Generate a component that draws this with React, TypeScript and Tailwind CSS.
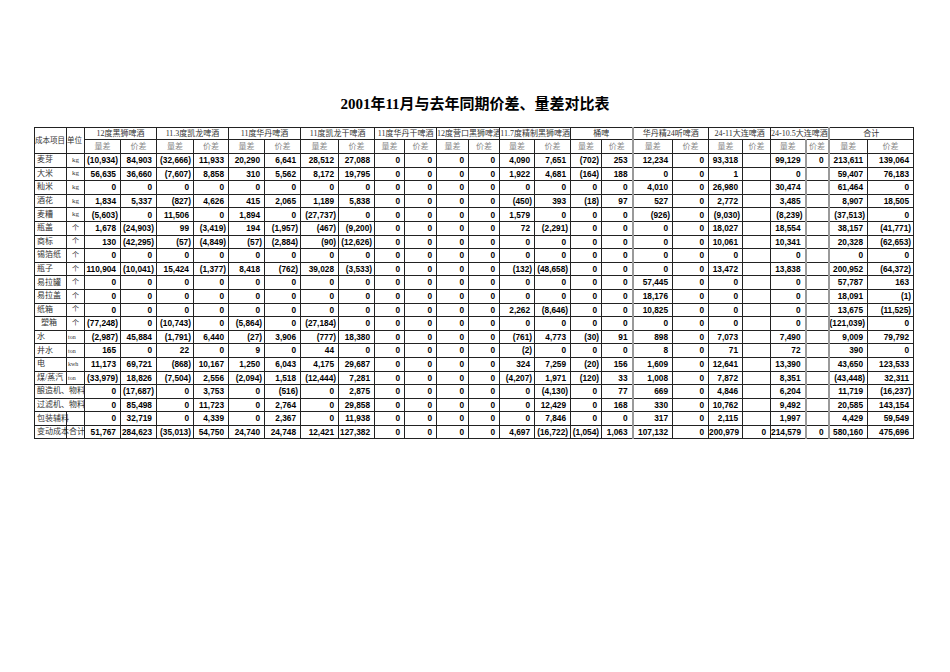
import React from "react";

const serif = "font-['Liberation_Serif','Noto_Sans_CJK_SC',serif]";
const sans = "font-['Liberation_Sans','Noto_Sans_CJK_SC',sans-serif]";

const colWidths = [32, 18, 36, 36, 37, 35, 36, 36, 38, 36, 30, 32, 32, 31, 35, 36, 31, 31, 40, 36, 34, 28, 35, 23, 39, 46];

const groups = [
  "12度黑狮啤酒",
  "11.3度凯龙啤酒",
  "11度华丹啤酒",
  "11度凯龙干啤酒",
  "11度华丹干啤酒",
  "12度营口黑狮啤酒",
  "11.7度精制黑狮啤酒",
  "桶啤",
  "华丹精24听啤酒",
  "24-11大连啤酒",
  "24-10.5大连啤酒",
  "合计",
];

// columns that carry the heavier grey rule on their left side
const thickCols = [16, 21, 22];
const thickGroups = [8, 11];

type Row = {
  label: string;
  unit?: string;
  unitSmall?: boolean;
  span?: boolean;
  rule?: boolean;
  v: string[];
};

const rows: Row[] = [
  { label: "麦芽", unit: "kg", v: ["(10,934)", "84,903", "(32,666)", "11,933", "20,290", "6,641", "28,512", "27,088", "0", "0", "0", "0", "4,090", "7,651", "(702)", "253", "12,234", "0", "93,318", "", "99,129", "0", "213,611", "139,064"] },
  { label: "大米", unit: "kg", v: ["56,635", "36,660", "(7,607)", "8,858", "310", "5,562", "8,172", "19,795", "0", "0", "0", "0", "1,922", "4,681", "(164)", "188", "0", "0", "1", "", "0", "", "59,407", "76,183"] },
  { label: "籼米", unit: "kg", v: ["0", "0", "0", "0", "0", "0", "0", "0", "0", "0", "0", "0", "0", "0", "0", "0", "4,010", "0", "26,980", "", "30,474", "", "61,464", "0"] },
  { label: "酒花", unit: "kg", v: ["1,834", "5,337", "(827)", "4,626", "415", "2,065", "1,189", "5,838", "0", "0", "0", "0", "(450)", "393", "(18)", "97", "527", "0", "2,772", "", "3,485", "", "8,907", "18,505"] },
  { label: "麦糟", unit: "kg", v: ["(5,603)", "0", "11,506", "0", "1,894", "0", "(27,737)", "0", "0", "0", "0", "0", "1,579", "0", "0", "0", "(926)", "0", "(9,030)", "", "(8,239)", "", "(37,513)", "0"] },
  { label: "瓶盖", unit: "个", v: ["1,678", "(24,903)", "99", "(3,419)", "194", "(1,957)", "(467)", "(9,200)", "0", "0", "0", "0", "72", "(2,291)", "0", "0", "0", "0", "18,027", "", "18,554", "", "38,157", "(41,771)"] },
  { label: "商标", unit: "个", v: ["130", "(42,295)", "(57)", "(4,849)", "(57)", "(2,884)", "(90)", "(12,626)", "0", "0", "0", "0", "0", "0", "0", "0", "0", "0", "10,061", "", "10,341", "", "20,328", "(62,653)"] },
  { label: "锡箔纸", unit: "个", v: ["0", "0", "0", "0", "0", "0", "0", "0", "0", "0", "0", "0", "0", "0", "0", "0", "0", "0", "0", "", "0", "", "0", "0"] },
  { label: "瓶子", unit: "个", v: ["110,904", "(10,041)", "15,424", "(1,377)", "8,418", "(762)", "39,028", "(3,533)", "0", "0", "0", "0", "(132)", "(48,658)", "0", "0", "0", "0", "13,472", "", "13,838", "", "200,952", "(64,372)"] },
  { label: "易拉罐", unit: "个", v: ["0", "0", "0", "0", "0", "0", "0", "0", "0", "0", "0", "0", "0", "0", "0", "0", "57,445", "0", "0", "", "0", "", "57,787", "163"] },
  { label: "易拉盖", unit: "个", v: ["0", "0", "0", "0", "0", "0", "0", "0", "0", "0", "0", "0", "0", "0", "0", "0", "18,176", "0", "0", "", "0", "", "18,091", "(1)"] },
  { label: "纸箱", unit: "个", v: ["0", "0", "0", "0", "0", "0", "0", "0", "0", "0", "0", "0", "2,262", "(8,646)", "0", "0", "10,825", "0", "0", "", "0", "", "13,675", "(11,525)"] },
  { label: "\u00a0\u00a0塑箱", unit: "个", v: ["(77,248)", "0", "(10,743)", "0", "(5,864)", "0", "(27,184)", "0", "0", "0", "0", "0", "0", "0", "0", "0", "0", "0", "0", "", "0", "", "(121,039)", "0"] },
  { label: "水", unit: "ton", unitSmall: true, v: ["(2,987)", "45,884", "(1,791)", "6,440", "(27)", "3,906", "(777)", "18,380", "0", "0", "0", "0", "(761)", "4,773", "(30)", "91", "898", "0", "7,073", "", "7,490", "", "9,009", "79,792"] },
  { label: "井水", unit: "ton", unitSmall: true, v: ["165", "0", "22", "0", "9", "0", "44", "0", "0", "0", "0", "0", "(2)", "0", "0", "0", "8", "0", "71", "", "72", "", "390", "0"] },
  { label: "电", unit: "kwh", unitSmall: true, v: ["11,173", "69,721", "(868)", "10,167", "1,250", "6,043", "4,175", "29,687", "0", "0", "0", "0", "324", "7,259", "(20)", "156", "1,609", "0", "12,641", "", "13,390", "", "43,650", "123,533"] },
  { label: "煤/蒸汽", unit: "ton", unitSmall: true, v: ["(33,979)", "18,826", "(7,504)", "2,556", "(2,094)", "1,518", "(12,444)", "7,281", "0", "0", "0", "0", "(4,207)", "1,971", "(120)", "33", "1,008", "0", "7,872", "", "8,351", "", "(43,448)", "32,311"] },
  { label: "酿造机、物料", span: true, v: ["0", "(17,687)", "0", "3,753", "0", "(516)", "0", "2,875", "0", "0", "0", "0", "0", "(4,130)", "0", "77", "669", "0", "4,846", "", "6,204", "", "11,719", "(16,237)"] },
  { label: "过滤机、物料", span: true, v: ["0", "85,498", "0", "11,723", "0", "2,764", "0", "29,858", "0", "0", "0", "0", "0", "12,429", "0", "168", "330", "0", "10,762", "", "9,492", "", "20,585", "143,154"] },
  { label: "包装辅料", span: true, rule: true, v: ["0", "32,719", "0", "4,339", "0", "2,367", "0", "11,938", "0", "0", "0", "0", "0", "7,846", "0", "0", "317", "0", "2,115", "", "1,997", "", "4,429", "59,549"] },
  { label: "变动成本合计", span: true, rule: true, v: ["51,767", "284,623", "(35,013)", "54,750", "24,740", "24,748", "12,421", "127,382", "0", "0", "0", "0", "4,697", "(16,722)", "(1,054)", "1,063", "107,132", "0", "200,979", "0", "214,579", "0", "580,160", "475,696"] },
];

const cell = "border border-[#222] p-0 overflow-hidden whitespace-nowrap";

function Num({ value, thick }: { value: string; thick: boolean }) {
  const neg = value.startsWith("(");
  return (
    <td
      className={`${cell} h-[13.6px] text-right align-middle text-[8.3px] leading-none font-bold text-black ${sans} ${
        neg ? "pr-[2px]" : "pr-[4px]"
      } ${thick ? "border-l-2 border-l-[#9a9a9a]" : ""}`}
    >
      {value}
    </td>
  );
}

function DataRow({ row }: { row: Row }) {
  return (
    <tr>
      {row.span ? (
        <td colSpan={2} className={`${cell} relative h-[13.6px] pl-[2px] text-[8px] leading-none text-[#333] ${serif}`}>
          {row.label}
          {row.rule && <span className="absolute left-[31px] top-0 bottom-0 w-px bg-[#222]" />}
        </td>
      ) : (
        <>
          <td className={`${cell} h-[13.6px] pl-[2px] text-[8px] leading-none text-[#333] ${serif}`}>{row.label}</td>
          <td
            className={`${cell} h-[13.6px] leading-none text-[#333] ${serif} ${
              row.unitSmall ? "pl-[1px] text-left text-[6px]" : "text-center text-[7px]"
            }`}
          >
            {row.unit}
          </td>
        </>
      )}
      {row.v.map((value, i) => (
        <Num key={i} value={value} thick={thickCols.includes(i)} />
      ))}
    </tr>
  );
}

export default function App() {
  return (
    <div className="w-[950px] h-[672px] bg-white pt-[95px]">
      <h1 className={`text-center text-[15px] leading-[18px] font-bold text-black ${serif}`}>
        2001年11月与去年同期价差、量差对比表
      </h1>

      <table className="mt-[14px] ml-[34px] w-[879px] table-fixed border-collapse">
        <colgroup>
          {colWidths.map((w, i) => (
            <col key={i} style={{ width: w }} />
          ))}
        </colgroup>
        <thead>
          <tr>
            <th rowSpan={2} className={`${cell} text-left text-[7.5px] leading-none font-normal text-[#333] ${serif}`}>
              成本项目
            </th>
            <th rowSpan={2} className={`${cell} text-left text-[7.5px] leading-none font-normal text-[#333] ${serif}`}>
              单位
            </th>
            {groups.map((g, i) => (
              <th
                key={g}
                colSpan={2}
                className={`${cell} h-[12px] text-center text-[8px] leading-none font-normal text-[#333] ${serif} ${
                  thickGroups.includes(i) ? "border-l-2 border-l-[#9a9a9a]" : ""
                }`}
              >
                {g}
              </th>
            ))}
          </tr>
          <tr>
            {groups.flatMap((g, gi) =>
              ["量差", "价差"].map((h, hi) => (
                <th
                  key={g + h}
                  className={`${cell} h-[14px] text-center text-[8px] leading-none font-normal text-[#888] ${serif} ${
                    thickCols.includes(gi * 2 + hi) ? "border-l-2 border-l-[#9a9a9a]" : ""
                  }`}
                >
                  {h}
                </th>
              ))
            )}
          </tr>
        </thead>
        <tbody>
          {rows.map((r) => (
            <DataRow key={r.label} row={r} />
          ))}
        </tbody>
      </table>
    </div>
  );
}
